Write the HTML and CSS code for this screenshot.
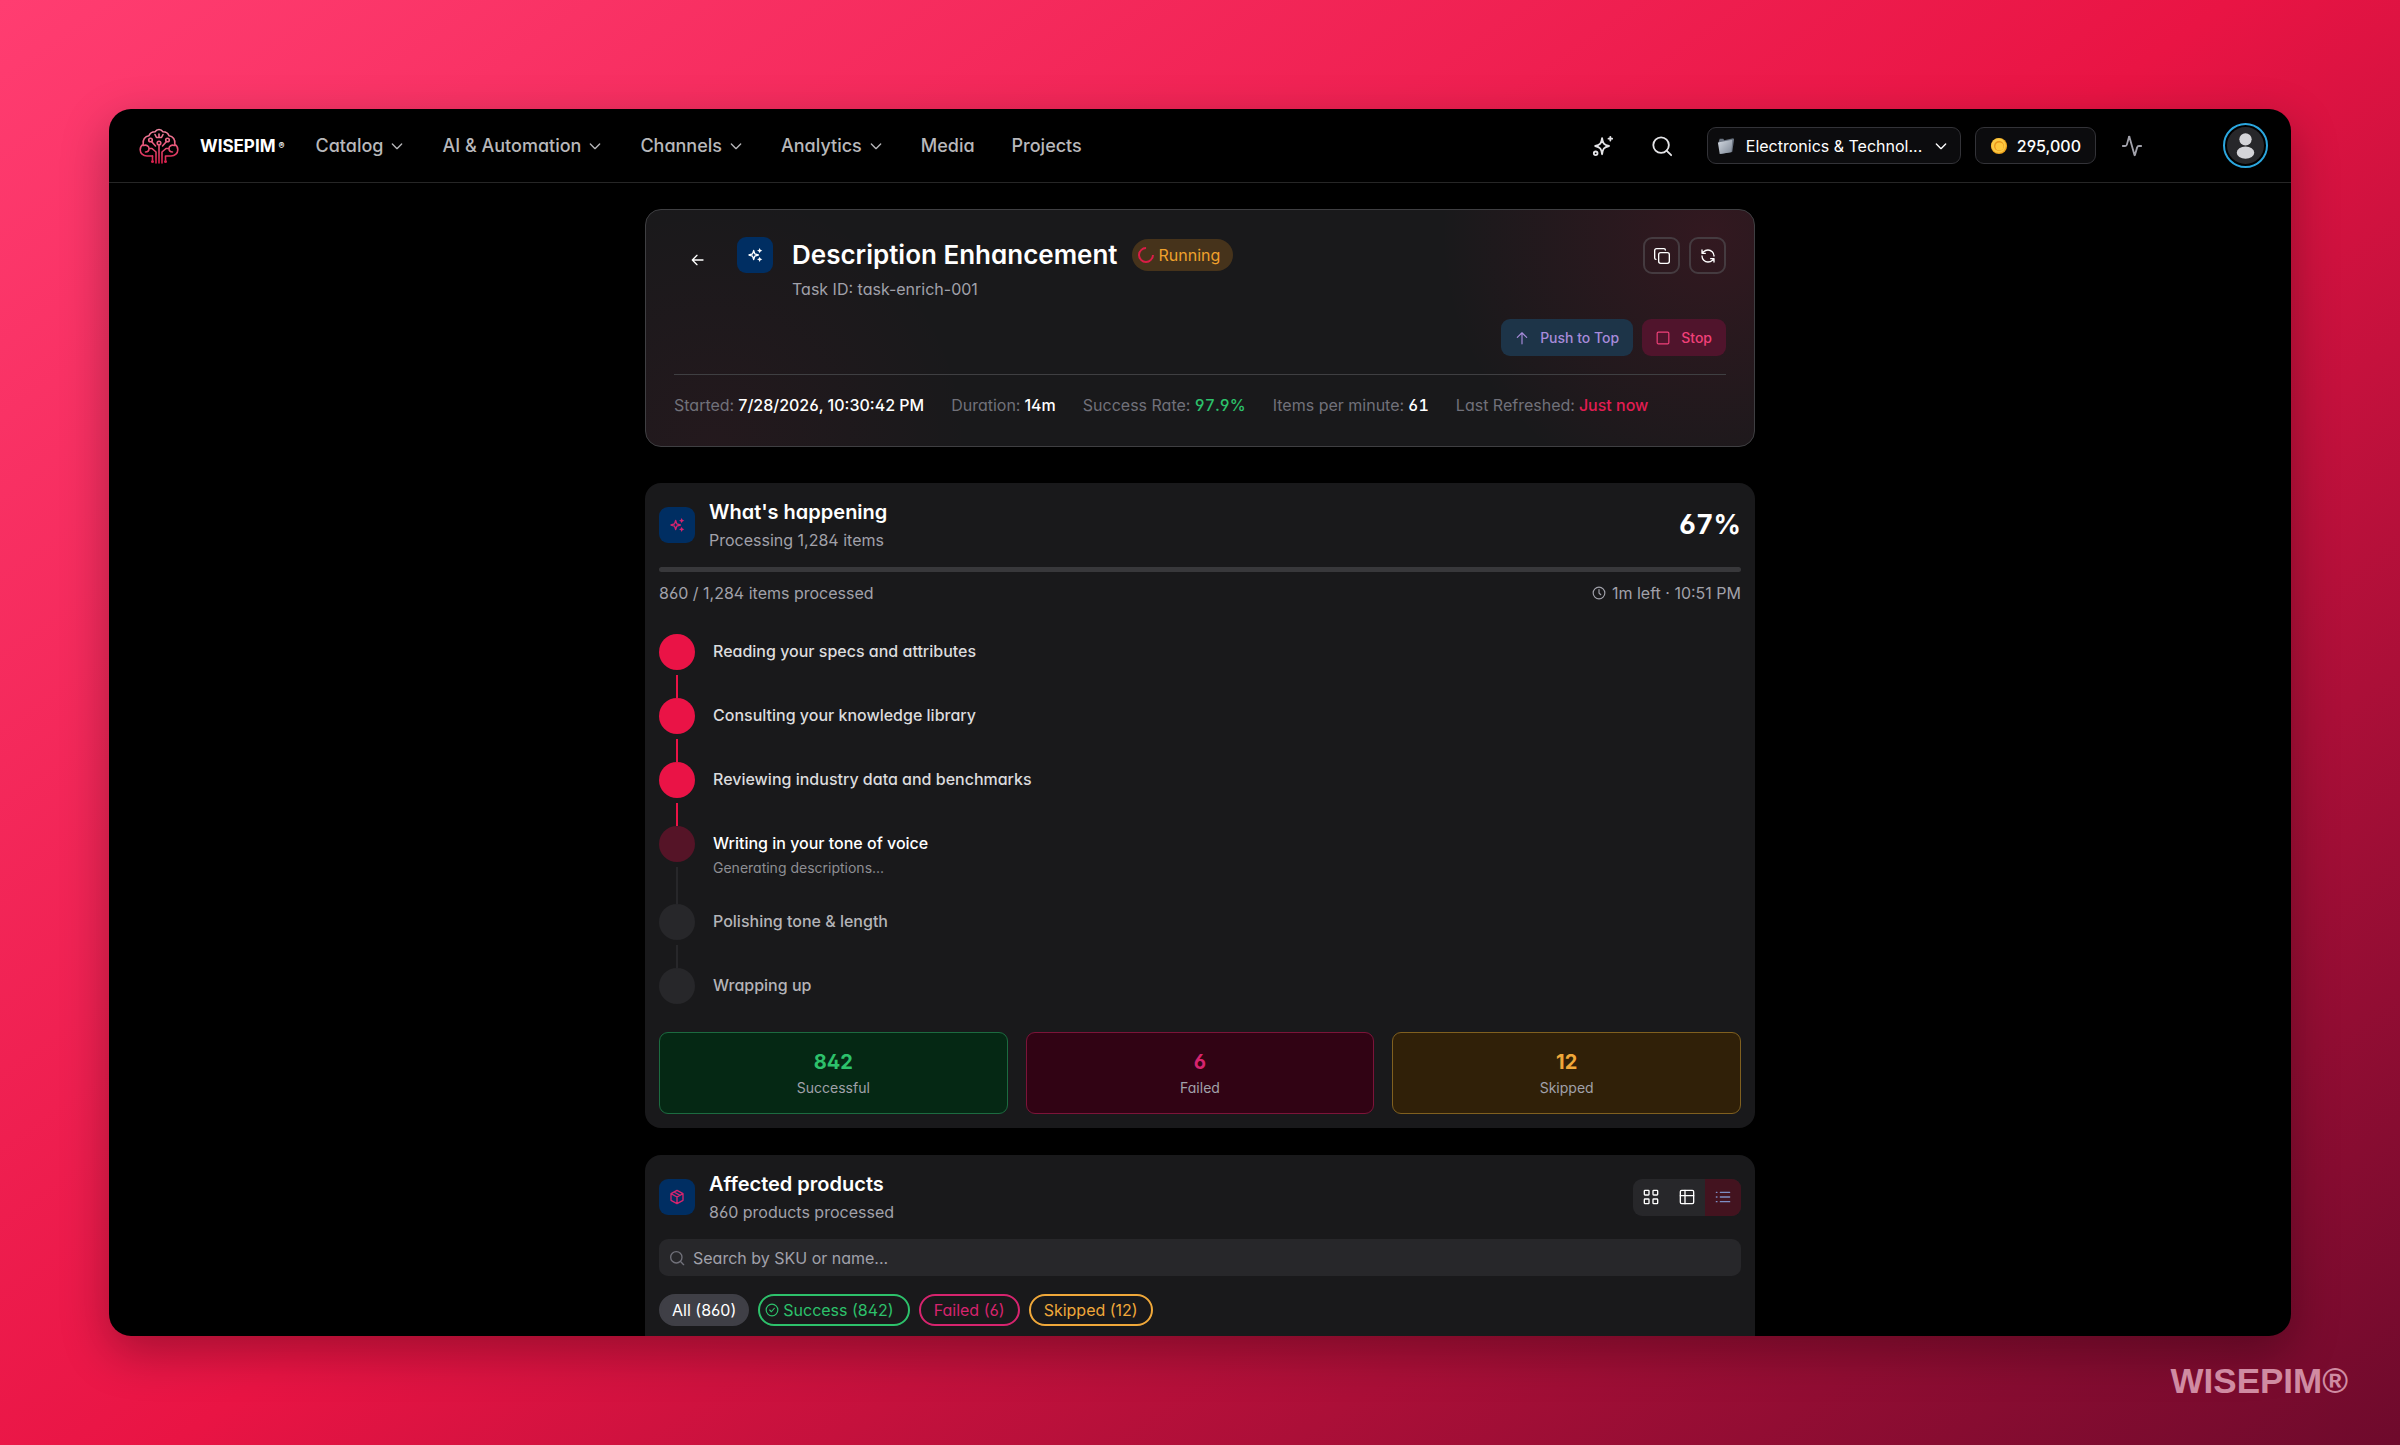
FILE: index.html
```html
<!DOCTYPE html>
<html lang="en">
<head>
<meta charset="utf-8">
<meta name="viewport" content="width=device-width, initial-scale=1">
<title>Description Enhancement – WISEPIM</title>
<link rel="stylesheet" href="styles.css">
</head>
<body>
<svg class="defs" aria-hidden="true">
  <defs>
    <linearGradient id="brand" x1="0" y1="0" x2="0" y2="36" gradientUnits="userSpaceOnUse"><stop offset="0" stop-color="#f58fa8"/><stop offset="1" stop-color="#d91a48"/></linearGradient>
    <linearGradient id="folder" x1="0" y1="0" x2="1" y2="1"><stop offset="0" stop-color="#d5dbe3"/><stop offset="1" stop-color="#7d8795"/></linearGradient>
    <symbol id="chevron" viewBox="0 0 24 24"><path d="m5 9 7 7 7-7"/></symbol>
    <symbol id="stars" viewBox="0 0 24 24"><path d="M10 5l1.700 5.300L17 12l-5.300 1.700L10 19l-1.700-5.300L3 12l5.300-1.700z"/><path class="solid" d="M19 1.500l1.200 2.800 2.800 1.200-2.800 1.200L19 9.500l-1.200-2.800L15 5.500l2.800-1.200zM19 14.500l1.200 2.800 2.800 1.200-2.800 1.200-1.200 2.800-1.200-2.800-2.800-1.200 2.800-1.200z"/></symbol>
    <symbol id="search" viewBox="0 0 24 24"><circle cx="11" cy="11" r="8.500"/><path d="m22 22-5-5"/></symbol>
  </defs>
</svg>
<div class="window">
  <header class="topbar">
    <a class="brand" href="#">
      <svg class="logo" viewBox="0 0 40 36" aria-hidden="true">
        <path d="M13.500 28H8c-4 0-6.800-2.800-6.800-6.300 0-2.500 1.200-4.200 3-5.200C3.400 11.500 6 8.300 10 7.800 11 5 13.500 3.800 16 3.800 17 2.200 18.500 1.500 20 1.500s3 .7 4 2.300c2.500 0 5 1.200 6 4 4 .5 6.600 3.700 5.800 8.700 1.800 1 3 2.700 3 5.200 0 3.500-2.800 6.300-6.800 6.300h-5.500v4"/>
        <path d="M13.500 28v4M20 35V17M17 35V24l-4-3.500h-2.500M23 35V24l4-3.500h2.500M4.500 17.500c3-1 5.500.5 5.500 3s-1.500 3.500-3.500 3.500M35.500 17.500c-3-1-5.500.5-5.500 3s1.500 3.500 3.500 3.500M12.500 13.500l4 4.500M27.500 13.500l-4 4.500M16 6.500l1.500 3h5l1.500-3M20 6v3"/>
        <circle cx="20" cy="15" r="1.800"/><circle cx="11.500" cy="12" r="1.800"/><circle cx="28.500" cy="12" r="1.800"/><circle cx="13.500" cy="33.500" r=".7"/><circle cx="26.500" cy="33.500" r=".7"/>
      </svg>
      <span class="wordmark">WISEPIM<small>®</small></span>
    </a>
    <nav class="menu">
      <a href="#">Catalog<svg><use href="#chevron"/></svg></a>
      <a href="#">AI &amp; Automation<svg><use href="#chevron"/></svg></a>
      <a href="#">Channels<svg><use href="#chevron"/></svg></a>
      <a href="#">Analytics<svg><use href="#chevron"/></svg></a>
      <a href="#">Media</a>
      <a href="#">Projects</a>
    </nav>
    <div class="tools">
      <button class="tool" aria-label="Assistant"><svg viewBox="0 0 24 24"><path d="M11 3.500c.7 5.500 2 7.300 7.500 8.500-5.500 1.200-6.800 3-7.500 9-.7-6-2-7.800-7.500-9C9 10.800 10.300 9 11 3.500z"/><path d="M20 2v4M18 4h4"/><circle cx="4" cy="20" r="2"/></svg></button>
      <button class="tool" aria-label="Search"><svg><use href="#search"/></svg></button>
      <button class="box catalog">
        <svg class="emoji" viewBox="0 0 20 20" aria-hidden="true"><path d="M2 5l1-3h4l1 1.500 10-2 1 1-2 14L4 19z" fill="#69727f"/><path d="M1 6l16-3-1 14-13 2z" fill="url(#folder)"/></svg>
        <span>Electronics &amp; Technol...</span>
        <svg class="caret"><use href="#chevron"/></svg>
      </button>
      <button class="box credits">
        <svg class="emoji" viewBox="0 0 20 20" aria-hidden="true"><circle cx="10" cy="10" r="9" fill="#f0a51d"/><circle cx="9.500" cy="9.500" r="8" fill="#fbc944"/><circle cx="10" cy="10" r="5.500" fill="#e9941a"/><circle cx="10.500" cy="10.500" r="4.500" fill="#ffc83d"/></svg>
        <span>295,000</span>
      </button>
      <button class="tool activity" aria-label="Activity"><svg viewBox="0 0 24 24"><path d="M22 12h-2.500a2 2 0 0 0-1.900 1.500L15.200 21.800a.25.25 0 0 1-.5 0L9.200 2.200a.25.25 0 0 0-.5 0L6.400 10.500A2 2 0 0 1 4.500 12H2"/></svg></button>
      <button class="avatar" aria-label="Account"><svg viewBox="0 0 36 36"><circle cx="18" cy="12" r="6"/><ellipse cx="18" cy="25" rx="8.500" ry="6"/></svg></button>
    </div>
  </header>

  <main class="content">
    <section class="card summary">
      <div class="summary-head">
        <button class="back" aria-label="Back"><svg viewBox="0 0 24 24"><path d="m12 19-7-7 7-7M21 12H5"/></svg></button>
        <span class="tile light"><svg><use href="#stars"/></svg></span>
        <div class="summary-title">
          <div class="title-line">
            <h1>Description Enhancement</h1>
            <span class="badge"><i class="spinner"></i>Running</span>
          </div>
          <p>Task ID: task-enrich-001</p>
        </div>
        <div class="icon-buttons">
          <button aria-label="Duplicate"><svg viewBox="0 0 24 24"><rect x="7" y="7" width="16" height="16" rx="3"/><path d="M3 17c-1.100 0-2-.9-2-2V4c0-1.700 1.300-3 3-3h11c1.100 0 2 .9 2 2"/></svg></button>
          <button aria-label="Refresh"><svg viewBox="0 0 24 24"><path d="M21 12a9 9 0 0 0-9-9 9.750 9.750 0 0 0-6.740 2.740L3 8M3 3v5h5M3 12a9 9 0 0 0 9 9 9.750 9.750 0 0 0 6.740-2.740L21 16M16 16h5v5"/></svg></button>
        </div>
      </div>
      <div class="actions">
        <button class="push"><svg viewBox="0 0 24 24"><path d="m4 11 8-8 8 8M12 22V3"/></svg>Push to Top</button>
        <button class="stop"><svg viewBox="0 0 24 24"><rect x="2" y="2" width="20" height="20" rx="2"/></svg>Stop</button>
      </div>
      <dl class="facts">
        <div><dt>Started:</dt><dd>7/28/2026, 10:30:42 PM</dd></div>
        <div><dt>Duration:</dt><dd>14m</dd></div>
        <div><dt>Success Rate:</dt><dd class="num green">97.9%</dd></div>
        <div><dt>Items per minute:</dt><dd class="num">61</dd></div>
        <div><dt>Last Refreshed:</dt><dd class="rose">Just now</dd></div>
      </dl>
    </section>

    <section class="card progress">
      <div class="card-head">
        <span class="tile"><svg><use href="#stars"/></svg></span>
        <div><h2>What's happening</h2><p>Processing 1,284 items</p></div>
        <strong class="percent num">67%</strong>
      </div>
      <div class="bar" role="progressbar" aria-label="Items processed"></div>
      <div class="bar-labels">
        <span>860 / 1,284 items processed</span>
        <span class="eta"><svg viewBox="0 0 24 24"><circle cx="12" cy="12" r="10"/><path d="M12 6v6l3 3"/></svg>1m left · 10:51 PM</span>
      </div>
      <ol class="steps">
        <li class="done"><i></i><div>Reading your specs and attributes</div></li>
        <li class="done"><i></i><div>Consulting your knowledge library</div></li>
        <li class="done"><i></i><div>Reviewing industry data and benchmarks</div></li>
        <li class="current"><i></i><div>Writing in your tone of voice<small>Generating descriptions...</small></div></li>
        <li><i></i><div>Polishing tone &amp; length</div></li>
        <li><i></i><div>Wrapping up</div></li>
      </ol>
      <div class="totals">
        <div class="total success"><strong>842</strong><span>Successful</span></div>
        <div class="total failed"><strong>6</strong><span>Failed</span></div>
        <div class="total skipped"><strong>12</strong><span>Skipped</span></div>
      </div>
    </section>

    <section class="card products">
      <div class="card-head">
        <span class="tile"><svg viewBox="0 0 24 24"><path d="M12 2l9 5v10l-9 5-9-5V7zM3 7l9 5 9-5M12 12v10M7.500 4.500l9 5"/></svg></span>
        <div><h2>Affected products</h2><p>860 products processed</p></div>
        <div class="views">
          <button aria-label="Grid view"><svg viewBox="0 0 24 24"><rect x="2" y="2" width="7" height="7" rx="1"/><rect x="15" y="2" width="7" height="7" rx="1"/><rect x="2" y="15" width="7" height="7" rx="1"/><rect x="15" y="15" width="7" height="7" rx="1"/></svg></button>
          <button aria-label="Table view"><svg viewBox="0 0 24 24"><rect x="2" y="2" width="20" height="20" rx="2"/><path d="M9 2v20M2 10h20"/></svg></button>
          <button class="on" aria-label="List view"><svg viewBox="0 0 24 24"><path d="M8 5h14M8 12h14M8 19h14M2 5h1M2 12h1M2 19h1"/></svg></button>
        </div>
      </div>
      <label class="search"><svg><use href="#search"/></svg><input type="search" placeholder="Search by SKU or name..." aria-label="Search by SKU or name"></label>
      <div class="chips">
        <button class="chip all">All (860)</button>
        <button class="chip ok"><svg viewBox="0 0 24 24"><circle cx="12" cy="12" r="10"/><path d="m8 12 3 3 5-6"/></svg>Success (842)</button>
        <button class="chip bad">Failed (6)</button>
        <button class="chip warn">Skipped (12)</button>
      </div>
    </section>
  </main>
</div>
<footer class="watermark">WISEPIM®</footer>
</body>
</html>
```
FILE: styles.css
```css
* { box-sizing: border-box; }

body {
  position: relative;
  display: flex;
  height: 100vh;
  margin: 0;
  padding: 109px;
  overflow: hidden;
  background: linear-gradient(145deg, #ff3d71 0%, #e91444 50%, #6e0a2c 100%);
  color: #fff;
  font: 400 16px/24px Inter, "Noto Sans", sans-serif;
  font-feature-settings: "cv02", "cv03", "cv04", "cv11";
}

h1, h2, p, dl, dd, ol { margin: 0; padding: 0; }
button { padding: 0; border: 0; background: none; color: inherit; font: inherit; font-feature-settings: inherit; cursor: pointer; }
a { color: inherit; text-decoration: none; }
svg { display: block; flex: none; fill: none; stroke: currentColor; stroke-width: 2; stroke-linecap: round; stroke-linejoin: round; }
.solid { fill: currentColor; stroke: none; }
.num { font-variant-numeric: tabular-nums; }
.defs { position: absolute; width: 0; height: 0; }

.window {
  flex: 1;
  min-width: 0;
  overflow: hidden;
  border-radius: 22px;
  background: #000;
  box-shadow: 0 16px 48px rgba(0, 0, 0, 0.3);
}

/* Top bar */
.topbar {
  display: flex;
  align-items: center;
  height: 74px;
  padding: 0 23px 0 30px;
  border-bottom: 1px solid #262626;
}
.brand { display: flex; align-items: center; gap: 21px; }
.logo { width: 40px; height: 36px; stroke: url(#brand); stroke-width: 1.600; }
.wordmark { display: flex; align-items: center; gap: 3px; font-size: 17px; font-weight: 700; }
.wordmark small { font-size: 9px; }
.menu { display: flex; gap: 37px; margin-left: 31px; color: #b8b8bb; font-size: 18px; font-weight: 500; }
.menu a { display: flex; align-items: center; gap: 6px; }
.menu svg { width: 16px; height: 16px; }
.tools { display: flex; align-items: center; margin-left: auto; color: #e4e4e7; }
.tool { display: grid; place-items: center; width: 36px; height: 36px; margin-right: 23px; }
.tool + .box { margin-left: 4px; }
.tool svg { width: 22px; height: 22px; }
.box { display: flex; align-items: center; height: 37px; border: 1px solid #333338; border-radius: 9px; background: #0c0c0e; color: #fff; font-weight: 500; white-space: nowrap; }
.catalog { gap: 11px; width: 254px; padding: 0 15px 0 9px; margin-right: 14px; font-weight: 400; }
.caret { width: 16px; height: 16px; margin-left: auto; }
.credits { gap: 9px; padding: 0 14px; }
.emoji { width: 18px; height: 18px; stroke: none; }
.tool.activity { margin: 0 73px 0 18px; color: #a1a1aa; }
.avatar { display: grid; place-items: center; width: 45px; height: 45px; padding: 0; border: 2px solid #2ba6de; border-radius: 50%; }
.avatar svg { width: 37px; height: 37px; border-radius: 50%; background: #27272a; fill: #d4d4d8; stroke: none; }

/* Cards */
.content { width: 100%; max-width: 1110px; margin: 0 auto; padding-top: 26px; }
.card { padding: 14px; border-radius: 16px; background: #19191b; }
.tile { display: grid; place-items: center; width: 36px; height: 36px; border-radius: 9px; background: #002e62; color: #d6246e; }
.tile svg { width: 16px; height: 16px; }
.tile.light { color: #fff; }

/* Task summary */
.summary {
  padding: 27px 28px 0;
  min-height: 238px;
  margin-bottom: 36px;
  border: 1px solid #3f3f42;
  background:
    radial-gradient(circle at 96% 10%, rgba(233, 20, 68, 0.12), transparent 270px),
    radial-gradient(circle at 6% 100%, rgba(233, 20, 68, 0.05), transparent 260px),
    #19191b;
}
.summary-head { display: flex; }
.back { display: grid; place-items: center; width: 45px; height: 46px; margin-right: 18px; }
.back svg { width: 16px; height: 16px; }
.summary-title { margin-left: 19px; }
.title-line { display: flex; align-items: center; gap: 14px; height: 36px; }
h1 { font-size: 26px; font-weight: 600; line-height: 36px; }
.badge { display: flex; align-items: center; gap: 5px; height: 32px; padding: 0 13px 0 6px; border-radius: 16px; background: #46331b; color: #f0a12c; }
.spinner { width: 16px; height: 16px; border: 2px solid #d91d46; border-top-color: transparent; border-radius: 50%; transform: rotate(45deg); }
.summary-title p { color: #a1a1aa; line-height: 32px; }
.icon-buttons { display: flex; gap: 9px; margin-left: auto; }
.icon-buttons button { display: grid; place-items: center; width: 37px; height: 37px; border: 2px solid #453b40; border-radius: 9px; }
.icon-buttons svg { width: 16px; height: 16px; }
.actions { display: flex; justify-content: flex-end; gap: 9px; margin-top: 14px; }
.actions button { display: flex; align-items: center; gap: 11px; height: 37px; padding: 0 14px; border-radius: 9px; font-size: 14px; font-weight: 500; }
.actions svg { width: 14px; height: 14px; }
.push { background: #1d3448; color: #a78bda; }
.stop { background: #50142c; color: #f04079; }
.facts { display: flex; gap: 27px; margin-top: 18px; padding-top: 18px; border-top: 1px solid #3f3f42; }
.facts div { display: flex; gap: 4px; }
.facts dt { color: #71717a; }
.facts dd { font-weight: 500; }
.facts .green { color: #2dc16b; }
.facts .rose { color: #e11d52; }

/* Progress */
.progress { margin-bottom: 27px; }
.card-head { display: flex; align-items: center; gap: 14px; }
.card-head p { color: #a1a1aa; line-height: 26px; }
h2 { font-size: 20px; font-weight: 600; line-height: 30px; }
.percent { margin-left: auto; font-size: 27px; }
.bar { height: 5px; margin-top: 14px; border-radius: 3px; background: #38383b; }
.bar-labels { display: flex; justify-content: space-between; margin: 9px 0 29px; color: #a1a1aa; }
.eta { display: flex; align-items: center; gap: 6px; }
.eta svg { width: 14px; height: 14px; }
.steps { list-style: none; }
.steps li { position: relative; display: flex; gap: 18px; min-height: 64px; color: #b4b4b8; font-weight: 500; line-height: 34px; }
.steps li:last-child { min-height: 36px; }
.steps i { width: 36px; height: 36px; border-radius: 50%; background: #27272a; }
.steps li:not(:last-child)::after { content: ""; position: absolute; top: 41px; bottom: 0; left: 17px; width: 2px; background: #27272a; }
.steps .done { color: #dcdcde; }
.steps .done i, .steps .done::after { background: #ea1346 !important; }
.steps .current { min-height: 78px; color: #fff; }
.steps .current i { background: #551427; }
.steps small { display: block; color: #8e8e93; font-size: 14px; font-weight: 400; line-height: 16px; }
.totals { display: grid; grid-template-columns: repeat(3, 1fr); gap: 18px; margin-top: 28px; }
.total { height: 82px; padding-top: 15px; border: 1px solid; border-radius: 9px; text-align: center; }
.total strong { display: block; font-size: 20px; line-height: 28px; }
.total span { display: block; color: #a1a1aa; font-size: 14px; }
.success { border-color: #1c6b40; background: #052814; color: #2dc16b; }
.failed { border-color: #7c1439; background: #310314; color: #d6246e; }
.skipped { border-color: #80601f; background: #302008; color: #f0a83a; }

/* Products */
.views { display: flex; margin-left: auto; overflow: hidden; border-radius: 9px; background: #27272a; }
.views button { display: grid; place-items: center; width: 36px; height: 37px; }
.views svg { width: 16px; height: 16px; }
.views .on { background: #43131f; color: #7d8ec4; }
.search { display: flex; align-items: center; gap: 8px; height: 37px; margin-top: 14px; padding: 0 10px; border-radius: 9px; background: #27272a; color: #71717a; }
.search svg { width: 16px; height: 16px; }
.search input { flex: 1; min-width: 0; padding: 0; border: 0; outline: 0; background: none; color: #fff; font: inherit; font-feature-settings: inherit; }
.search input::placeholder { color: #a1a1aa; opacity: 1; }
.chips { display: flex; gap: 9px; margin-top: 18px; padding-bottom: 40px; }
.chip { display: flex; align-items: center; gap: 4px; height: 32px; padding: 0 13px; border: 2px solid; border-radius: 16px; }
.chip svg { width: 14px; height: 14px; }
.chip.all { padding: 0 11px; border-color: #3f3f46; background: #3f3f46; }
.chip.ok { padding: 0 14px 0 5px; color: #2dc16b; }
.bad { color: #d6246e; }
.warn { color: #f0a83a; }

.watermark { position: absolute; right: 52px; bottom: 44px; color: #d08ba2; font: 700 35px/40px "Liberation Sans", sans-serif; }
```
